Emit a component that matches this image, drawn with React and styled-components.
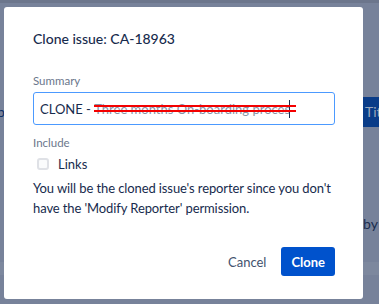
import React from "react";
import styled, { createGlobalStyle } from "styled-components";

const GlobalStyle = createGlobalStyle`
  html, body {
    margin: 0;
    padding: 0;
  }
  body {
    width: 379px;
    height: 304px;
    overflow: hidden;
    background: #77829a;
    font-family: Lato, "Open Sans", sans-serif;
    color: #172b4d;
  }
`;

const Page = styled.div`
  position: relative;
  width: 379px;
  height: 304px;
  box-sizing: border-box;
  padding: 7px 16px 5px 4px;
  background: linear-gradient(#6c768c 0 3px, transparent 3px),
    linear-gradient(transparent 262px, #7d889e 262px 275px, transparent 275px);
`;

const Behind = styled.div`
  position: absolute;
  left: ${(p) => p.$x}px;
  top: ${(p) => p.$y}px;
  font-size: 14px;
  color: ${(p) => p.$color || "#0f2650"};
  background: ${(p) => p.$bg || "transparent"};
  line-height: ${(p) => p.$h || 20}px;
  height: ${(p) => p.$h || 20}px;
  padding: ${(p) => p.$pad || 0};
  white-space: nowrap;
`;

const Modal = styled.div`
  position: relative;
  width: 359px;
  height: 292px;
  box-sizing: border-box;
  background: #fff;
  border-radius: 3px;
  padding: 22px 28px 0 29px;
  display: flex;
  flex-direction: column;
`;

const Title = styled.h1`
  margin: 0;
  font-size: 14px;
  font-weight: 500;
  line-height: 20px;
  color: #172b4d;
`;

const Label = styled.div`
  font-size: 11.5px;
  color: #6b778c;
  line-height: 16px;
  margin-top: ${(p) => p.$top}px;
`;

const Input = styled.div`
  margin-top: 3px;
  height: 33px;
  box-sizing: border-box;
  border: 1px solid #4c9aff;
  border-radius: 3px;
  padding: 0 6px;
  display: flex;
  align-items: center;
  font-size: 13px;
  color: #172b4d;
  white-space: nowrap;
  overflow: hidden;
`;

const Struck = styled.span`
  position: relative;
  display: flex;
  align-items: center;
  &::before,
  &::after {
    content: "";
    position: absolute;
    left: 0;
    right: -6px;
    height: 2px;
    background: #f40000;
  }
  &::before {
    top: 5px;
  }
  &::after {
    top: 10px;
  }
`;

const Clip = styled.span`
  display: block;
  width: 195px;
  line-height: 18px;
  overflow: hidden;
  color: #8993a4;
`;

const Caret = styled.span`
  width: 1px;
  height: 18px;
  background: #172b4d;
`;

const CheckRow = styled.label`
  display: flex;
  align-items: center;
  gap: 9px;
  margin-top: 4px;
  padding-left: 4px;
  font-size: 13px;
  line-height: 18px;
`;

const Box = styled.span`
  width: 12px;
  height: 12px;
  box-sizing: border-box;
  border: 2px solid #dfe1e6;
  border-radius: 3px;
  background: #fafbfc;
`;

const Note = styled.p`
  margin: 5px 0 0;
  font-size: 13px;
  letter-spacing: -0.1px;
  line-height: 20px;
  color: #172b4d;
`;

const Footer = styled.div`
  margin-top: auto;
  margin-bottom: 23px;
  display: flex;
  justify-content: flex-end;
  gap: 5px;
`;

const Button = styled.button`
  height: 29px;
  border: none;
  border-radius: 3px;
  padding: 0 10px;
  font-family: inherit;
  font-size: 13px;
  font-weight: ${(p) => (p.$primary ? 700 : 400)};
  background: ${(p) => (p.$primary ? "#0052cc" : "transparent")};
  color: ${(p) => (p.$primary ? "#fff" : "#42526e")};
  cursor: pointer;
`;

export default function App() {
  return (
    <>
      <GlobalStyle />
      <Page>
        <Behind $x={-3} $y={102} $color="#0b2e66">
          b
        </Behind>
        <Behind $x={363} $y={97} $h={30} $bg="#0a3c88" $color="#9aa6bb" $pad="0 6px 0 2px">
          Tit
        </Behind>
        <Behind $x={363} $y={214} $color="#1a2c4e">
          by
        </Behind>
        <Modal>
          <Title>Clone issue: CA-18963</Title>
          <Label $top={24}>Summary</Label>
          <Input>
            CLONE -&nbsp;
            <Struck>
              <Clip>Three months On-boarding process</Clip>
              <Caret />
            </Struck>
          </Input>
          <Label $top={10}>Include</Label>
          <CheckRow>
            <Box />
            Links
          </CheckRow>
          <Note>
            You will be the cloned issue's reporter since you don't have the
            'Modify Reporter' permission.
          </Note>
          <Footer>
            <Button>Cancel</Button>
            <Button $primary>Clone</Button>
          </Footer>
        </Modal>
      </Page>
    </>
  );
}
